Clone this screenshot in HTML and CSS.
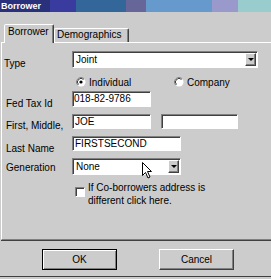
FILE: index.html
```html
<!DOCTYPE html>
<html lang="en">
<head>
  <meta charset="UTF-8" />
  <title>Borrower</title>
  <link rel="stylesheet" href="styles.css">
</head>
<body>
  <div class="window">
    <div class="titlebar">
      <div class="seg s1"><span class="title">Borrower</span></div>
      <div class="seg s2"></div>
      <div class="seg s3"></div>
      <div class="seg s4"></div>
      <div class="seg s5"></div>
      <div class="seg s6"></div>
      <div class="seg s7"></div>
    </div>

    <div class="tabs">
      <div class="tab active">Borrower</div>
      <div class="tab second">Demographics</div>
    </div>

    <div class="panel">
      <div class="row row-type">
        <span class="lbl">Type</span>
        <div class="select select-type">
          <span class="val">Joint</span>
          <span class="drop"><span class="arrow"></span></span>
        </div>
      </div>

      <div class="row row-radio">
        <span class="radio-opt first">
          <svg width="10" height="10" viewBox="0 0 10 10">
            <circle cx="5" cy="5" r="4.5" fill="#fff"/>
            <path d="M1.8 8.2 A4.5 4.5 0 0 1 8.2 1.8" fill="none" stroke="#808080" stroke-width="1"/>
            <path d="M2.5 7.5 A3.5 3.5 0 0 1 7.5 2.5" fill="none" stroke="#404040" stroke-width="1"/>
            <circle cx="5" cy="5" r="1.6" fill="#000"/>
          </svg>
          Individual
        </span>
        <span class="radio-opt">
          <svg width="10" height="10" viewBox="0 0 10 10">
            <circle cx="5" cy="5" r="4.5" fill="#fff"/>
            <path d="M1.8 8.2 A4.5 4.5 0 0 1 8.2 1.8" fill="none" stroke="#808080" stroke-width="1"/>
            <path d="M2.5 7.5 A3.5 3.5 0 0 1 7.5 2.5" fill="none" stroke="#404040" stroke-width="1"/>
          </svg>
          Company
        </span>
      </div>

      <div class="row row-tax">
        <span class="lbl">Fed Tax Id</span>
        <div class="field tax">018-82-9786</div>
      </div>

      <div class="row row-name">
        <span class="lbl">First, Middle,</span>
        <div class="field first">JOE</div>
        <div class="field middle"></div>
      </div>

      <div class="row row-last">
        <span class="lbl">Last Name</span>
        <div class="field last">FIRSTSECOND</div>
      </div>

      <div class="row row-gen">
        <span class="lbl">Generation</span>
        <div class="select select-gen">
          <span class="val">None</span>
          <span class="drop"><span class="arrow"></span></span>
        </div>
      </div>

      <div class="row row-check">
        <span class="checkbox"></span>
        <span class="check-text">If Co-borrowers address is<br>different click here.</span>
      </div>
    </div>

    <div class="buttons">
      <button class="btn default">OK</button>
      <button class="btn">Cancel</button>
    </div>

    <svg class="cursor" width="11" height="17" viewBox="0 0 11 17">
      <path d="M0.5 0.5 L0.5 13.5 L3.5 10.5 L6 16 L8 15 L5.5 9.5 L9.5 9.5 Z" fill="#fff" stroke="#000" stroke-width="1"/>
    </svg>
  </div>
</body>
</html>
```

FILE: styles.css
```css
* {
  box-sizing: border-box;
}
body {
  margin: 0;
  background: #cccccc;
  font: 10px "Liberation Sans", Arial, sans-serif;
  color: #000;
  overflow: hidden;
}
.window {
  position: relative;
  width: 271px;
  height: 279px;
}

/* title bar */
.titlebar {
  display: flex;
  height: 12px;
}
.seg {
  height: 12px;
}
.s1 { width: 50px; background: #29307c; }
.s2 { width: 26px; background: #3a3b9e; }
.s3 { width: 50px; background: #336699; }
.s4 { width: 20px; background: #666699; }
.s5 { width: 66px; background: #6699cc; }
.s6 { width: 26px; background: #9999cc; }
.s7 { width: 33px; background: #99cccc; }
.title {
  display: block;
  color: #fff;
  font-weight: bold;
  font-size: 9px;
  line-height: 12px;
  padding-left: 1px;
  white-space: nowrap;
}

/* tabs */
.tabs {
  display: flex;
  align-items: flex-end;
  height: 30px;
  padding-left: 4px;
}
.tab {
  height: 14px;
  width: 75px;
  padding-left: 2px;
  line-height: 12px;
  border: 1px solid;
  border-bottom: none;
  border-color: #fff #404040 transparent #fff;
  border-radius: 2px 2px 0 0;
  box-shadow: inset -1px 0 #808080;
  white-space: nowrap;
}
.tab.active {
  position: relative;
  z-index: 1;
  width: 50px;
  height: 19px;
  margin-bottom: -1px;
  padding-left: 3px;
  line-height: 14px;
  background: #cccccc;
}

/* panel */
.panel {
  margin-left: 1px;
  margin-right: -4px;
  height: 198px;
  padding-left: 4px;
  border-top: 1px solid #fff;
  border-left: 1px solid #fff;
  border-bottom: 1px solid #808080;
  box-shadow: 0 1px 0 #404040;
}
.row {
  display: flex;
  align-items: flex-start;
}
.lbl {
  width: 66px;
  flex: none;
  line-height: 12px;
  white-space: nowrap;
}

.field {
  height: 15px;
  background: #fff;
  border: 1px solid;
  border-color: #808080 #fff #fff #808080;
  box-shadow: inset 1px 1px #404040;
  padding-left: 2px;
  line-height: 13px;
  white-space: nowrap;
}
.select {
  display: flex;
  justify-content: space-between;
  height: 17px;
  background: #fff;
  border: 1px solid;
  border-color: #808080 #fff #fff #808080;
  box-shadow: inset 1px 1px #404040;
  padding: 1px 1px 1px 3px;
}
.select .val {
  line-height: 14px;
}
.drop {
  display: flex;
  align-items: center;
  justify-content: center;
  width: 11px;
  height: 13px;
  background: #cccccc;
  border: 1px solid;
  border-color: #fff #404040 #404040 #fff;
  box-shadow: inset -1px -1px #808080;
}
.arrow {
  width: 0;
  height: 0;
  border-left: 3px solid transparent;
  border-right: 3px solid transparent;
  border-top: 3px solid #000;
}

.row-type {
  margin-top: 8px;
  height: 17px;
}
.row-type .lbl {
  padding-top: 7px;
  width: 68px;
  margin-left: -2px;
}
.select-type {
  width: 186px;
}

.row-radio {
  margin-top: 7px;
  height: 14px;
  padding-left: 70px;
  align-items: center;
}
.radio-opt {
  display: flex;
  align-items: center;
  gap: 3px;
  white-space: nowrap;
}
.radio-opt.first {
  width: 98px;
}

.row-tax {
  margin-top: 2px;
  height: 16px;
}
.row-tax .lbl {
  padding-top: 7px;
}
.tax {
  width: 79px;
  height: 16px;
  padding-left: 1px;
  line-height: 14px;
}

.row-name {
  margin-top: 7px;
  height: 15px;
}
.row-name .lbl {
  padding-top: 6px;
}
.first {
  width: 79px;
}
.middle {
  width: 77px;
  margin-left: 10px;
}

.row-last {
  margin-top: 7px;
  height: 15px;
}
.row-last .lbl {
  padding-top: 7px;
}
.last {
  width: 109px;
}

.row-gen {
  margin-top: 7px;
  height: 17px;
}
.row-gen .lbl {
  padding-top: 4px;
}
.select-gen {
  width: 109px;
}

.row-check {
  margin-top: 6px;
  padding-left: 69px;
}
.checkbox {
  flex: none;
  width: 10px;
  height: 10px;
  margin-top: 6px;
  background: #fff;
  border: 1px solid;
  border-color: #808080 #fff #fff #808080;
  box-shadow: inset 1px 1px #404040;
}
.check-text {
  margin-left: 3px;
  line-height: 13px;
}

/* buttons */
.buttons {
  display: flex;
  gap: 42px;
  padding: 9px 0 6px 42px;
  border-bottom: 1px solid #404040;
}
.btn {
  width: 75px;
  height: 21px;
  padding: 0;
  font: inherit;
  color: #000;
  background: #cccccc;
  border: 1px solid;
  border-color: #fff #404040 #404040 #fff;
  box-shadow: inset -1px -1px #808080;
}
.btn.default {
  border-color: #000;
  box-shadow: inset 1px 1px #fff, inset -1px -1px #808080;
}

.cursor {
  position: absolute;
  left: 142px;
  top: 162px;
}
```
